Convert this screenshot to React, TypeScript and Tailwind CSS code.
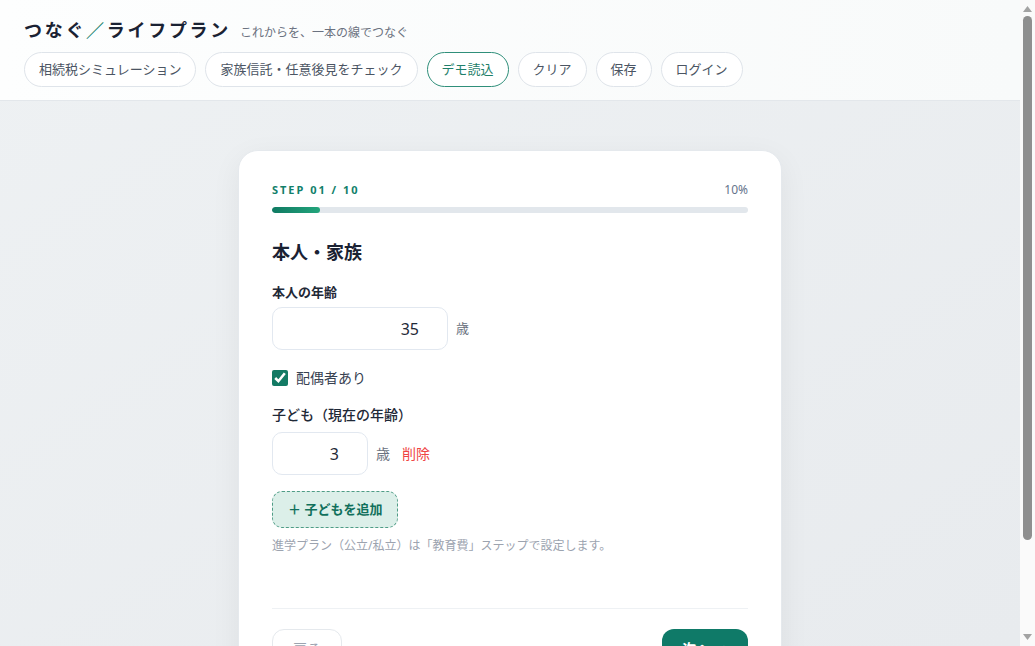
import { useState } from 'react';

const headerButtons = ['相続税シミュレーション', '家族信託・任意後見をチェック', 'デモ読込', 'クリア', '保存', 'ログイン'];

export default function App() {
  const [age, setAge] = useState('35');
  const [spouse, setSpouse] = useState(true);
  const [children, setChildren] = useState<string[]>(['3']);

  return (
    <div
      className="flex h-screen text-[#1e293b]"
      style={{ fontFamily: '"Noto Sans", "Noto Sans CJK JP", sans-serif' }}
    >
      <div className="min-w-0 flex-1 overflow-hidden bg-gradient-to-br from-[#eef1f3] to-[#e8ebee]">
        {/* Header */}
        <header className="border-b border-[#e3e7eb] bg-gradient-to-r from-[#fdfefe] to-[#f8fafa] px-6 pb-[13px] pt-4">
          <div className="flex items-baseline gap-[9px]">
            <h1 className="text-[18px] font-bold leading-7 tracking-[0.15em] text-[#1a2233]">
              つなぐ<span className="text-[#12806a]">／</span>ライフプラン
            </h1>
            <span className="text-xs text-[#6b7280]">これからを、一本の線でつなぐ</span>
          </div>
          <div className="mt-2 flex items-center gap-[9px]">
            {headerButtons.map((label) => (
              <button
                key={label}
                className={
                  label === 'デモ読込'
                    ? 'h-[35px] rounded-full border border-[#2f8f7a] bg-white px-[14px] text-[13px] text-[#1f7f6b]'
                    : 'h-[35px] rounded-full border border-[#dfe4ea] bg-white px-[14px] text-[13px] text-[#4b5563]'
                }
              >
                {label}
              </button>
            ))}
          </div>
        </header>

        {/* Main */}
        <main className="px-4 pb-24 pt-[49px]">
          <div className="mx-auto w-full max-w-[544px] rounded-[20px] border border-[#e5e9ed] bg-white px-[33px] pb-8 pt-[31px] shadow-[0_8px_30px_rgba(15,23,42,0.06)]">
            {/* Progress */}
            <div className="flex items-center justify-between">
              <span className="text-[11px] font-bold tracking-[0.18em] text-[#11806a]">STEP 01 / 10</span>
              <span className="text-xs text-[#64748b]">10%</span>
            </div>
            <div className="mt-2 h-1.5 w-full overflow-hidden rounded-full bg-[#e2e7ec]">
              <div className="h-full w-[10%] rounded-full bg-gradient-to-r from-[#0f7a62] to-[#23a57c]" />
            </div>

            <h2 className="mt-[25px] text-[18px] font-bold leading-7 text-[#1a2233]">本人・家族</h2>

            {/* Age */}
            <label className="mt-[17px] block text-[13px] font-bold text-[#1f2937]">本人の年齢</label>
            <div className="mt-[5px] flex items-center gap-2">
              <input
                value={age}
                onChange={(e) => setAge(e.target.value)}
                className="h-[43px] w-[176px] rounded-[10px] border border-[#e2e8f0] pr-7 text-right text-base text-[#1f2937] outline-none"
              />
              <span className="text-[13px] text-[#6b7280]">歳</span>
            </div>

            {/* Spouse */}
            <label className="mt-[18px] flex items-center gap-2 text-sm text-[#374151]">
              <input
                type="checkbox"
                checked={spouse}
                onChange={(e) => setSpouse(e.target.checked)}
                className="h-4 w-4 accent-[#137a64]"
              />
              配偶者あり
            </label>

            {/* Children */}
            <div className="mt-[17px] text-sm font-medium text-[#1f2937]">子ども（現在の年齢）</div>
            <div className="mt-[7px] flex flex-col gap-2">
              {children.map((c, i) => (
                <div key={i} className="flex items-center gap-2">
                  <input
                    value={c}
                    onChange={(e) => setChildren(children.map((v, j) => (j === i ? e.target.value : v)))}
                    className="h-[43px] w-[96px] rounded-[10px] border border-[#e2e8f0] pr-7 text-right text-base text-[#1f2937] outline-none"
                  />
                  <span className="text-sm text-[#6b7280]">歳</span>
                  <button
                    onClick={() => setChildren(children.filter((_, j) => j !== i))}
                    className="ml-1 text-sm text-[#ef4444]"
                  >
                    削除
                  </button>
                </div>
              ))}
            </div>

            <button
              onClick={() => setChildren([...children, '0'])}
              className="mt-4 h-[37px] rounded-[10px] border border-dashed border-[#4f9c86] bg-[#dcefe9] px-[15px] text-[13px] font-bold text-[#11705c]"
            >
              ＋ 子どもを追加
            </button>
            <p className="mt-[10px] text-xs text-[#9ca3af]">進学プラン（公立/私立）は「教育費」ステップで設定します。</p>

            {/* Footer */}
            <div className="mt-[54px] flex items-center justify-between border-t border-[#eef1f4] pt-5">
              <button className="h-10 rounded-[12px] border border-[#e5e9ed] bg-white px-5 text-sm text-[#9ca3af]">
                戻る
              </button>
              <button className="h-10 rounded-[12px] bg-[#0f7a68] px-5 text-sm font-bold text-white">次へ →</button>
            </div>
          </div>
        </main>
      </div>

      {/* Scrollbar */}
      <div className="flex w-[15px] flex-col items-center bg-[#fafafa] py-[3px]">
        <svg width="9" height="6" viewBox="0 0 9 6" className="mt-[3px] fill-[#a3a3a3]">
          <path d="M4.5 0 L9 6 L0 6 Z" />
        </svg>
        <div className="mt-1 h-[524px] w-[9px] rounded-full bg-[#8f8f8f]" />
        <div className="flex-1" />
        <svg width="9" height="6" viewBox="0 0 9 6" className="mb-[3px] fill-[#a3a3a3]">
          <path d="M0 0 L9 0 L4.5 6 Z" />
        </svg>
      </div>
    </div>
  );
}
